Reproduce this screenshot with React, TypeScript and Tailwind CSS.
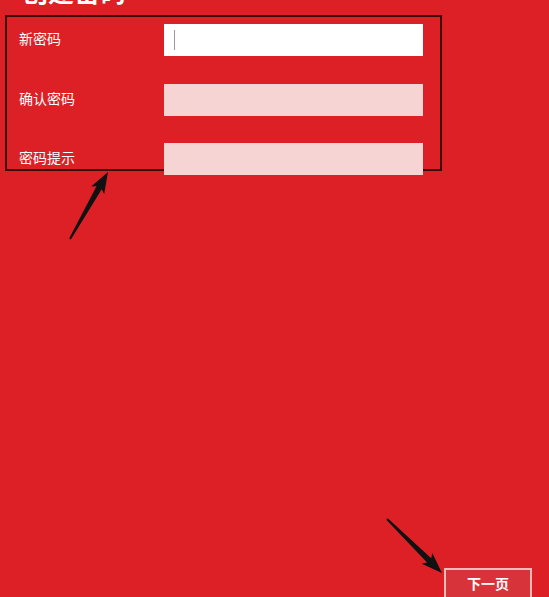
import React from "react";

type Pt = [number, number];

// tapered annotation arrow: thin at the tail, widening to a solid head at the tip
function arrowPoints(tail: Pt, tip: Pt, headLen = 18, headHalf = 7.5, shaftTail = 1, shaftHead = 3) {
  const dx = tip[0] - tail[0];
  const dy = tip[1] - tail[1];
  const len = Math.hypot(dx, dy);
  const ux = dx / len;
  const uy = dy / len;
  const nx = -uy;
  const ny = ux;
  const bx = tip[0] - ux * headLen;
  const by = tip[1] - uy * headLen;
  const pts: Pt[] = [
    [tail[0] + nx * shaftTail, tail[1] + ny * shaftTail],
    [bx + nx * shaftHead, by + ny * shaftHead],
    [bx - ux * 3 + nx * headHalf, by - uy * 3 + ny * headHalf],
    tip,
    [bx - ux * 3 - nx * headHalf, by - uy * 3 - ny * headHalf],
    [bx - nx * shaftHead, by - ny * shaftHead],
    [tail[0] - nx * shaftTail, tail[1] - ny * shaftTail],
  ];
  return pts.map((p) => p.join(",")).join(" ");
}

const fields = [
  { label: "新密码", active: true },
  { label: "确认密码", active: false },
  { label: "密码提示", active: false },
];

export default function App() {
  return (
    <div className="relative w-[549px] h-[597px] overflow-hidden bg-[#dc2026] font-['Noto_Sans_CJK_SC','Microsoft_YaHei',sans-serif] text-white">
      {/* Title, mostly scrolled out of view */}
      <h1 className="-mt-[22px] pl-[22px] text-[26px] leading-[26px] font-bold">创建密码</h1>

      {/* Form, outlined */}
      <div className="mt-[11px] ml-[5px] w-[437px] h-[156px] border-2 border-[#3a0a0c]">
        <div className="flex flex-col gap-[27.5px] pt-[7px] pl-[12px]">
          {fields.map((f) => (
            <div key={f.label} className="flex items-center">
              <span className="w-[145px] text-[14px] leading-none pb-[4px]">{f.label}</span>
              <div
                className={
                  f.active
                    ? "w-[259px] h-[32px] bg-white flex items-center pl-[10px]"
                    : "w-[259px] h-[32px] bg-[#f7d4d4]"
                }
              >
                {f.active && <div className="w-px h-[20px] bg-[#9a9a9a]" />}
              </div>
            </div>
          ))}
        </div>
      </div>

      {/* Next button */}
      <div className="absolute left-[444px] top-[568px] w-[88px] h-[36px] border-2 border-[#f2b9b9] bg-[#d7333a] flex justify-center pt-[3px]">
        <span className="text-[14px] font-bold leading-[20px]">下一页</span>
      </div>

      {/* Annotation arrows */}
      <svg className="absolute inset-0 pointer-events-none" width="549" height="597">
        <polygon points={arrowPoints([70, 239], [108, 172])} fill="#111" />
        <polygon points={arrowPoints([387, 519], [442, 573])} fill="#111" />
      </svg>
    </div>
  );
}
